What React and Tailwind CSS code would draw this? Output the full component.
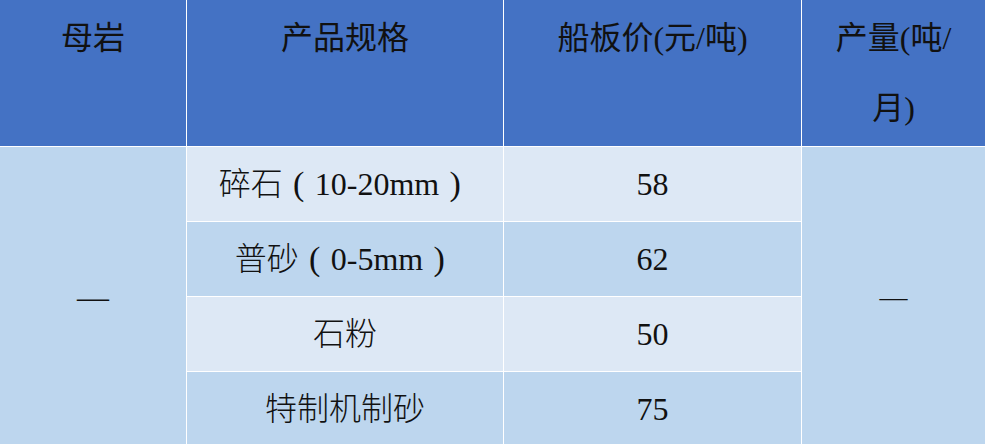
import React from "react";

const font = { fontFamily: '"Liberation Serif", "Noto Sans CJK SC", serif' };

// Song-style full-width bracket: glyph centred in a 1em box
const P = ({ children }) => (
  <span className="inline-block w-[32px] text-center text-[34px] leading-none">{children}</span>
);

const rows = [
  {
    spec: (
      <>
        碎石<P>(</P>10-20mm<P>)</P>
      </>
    ),
    price: "58",
    light: true,
  },
  {
    spec: (
      <>
        普砂<P>(</P>0-5mm<P>)</P>
      </>
    ),
    price: "62",
    light: false,
  },
  { spec: "石粉", price: "50", light: true },
  { spec: "特制机制砂", price: "75", light: false },
];

export default function App() {
  return (
    <div
      className="w-[985px] h-[444px] overflow-hidden bg-white text-[#111]"
      style={font}
    >
      <div className="grid grid-cols-[186px_316px_297px_1fr] grid-rows-[146px_74px_74px_74px_74px] gap-[1px]">
        {/* header */}
        <div className="bg-[#4472C4] text-center text-[32px] leading-[70px] pt-[3px]">母岩</div>
        <div className="bg-[#4472C4] text-center text-[32px] leading-[70px] pt-[3px]">产品规格</div>
        <div className="bg-[#4472C4] text-center text-[32px] leading-[70px] pt-[3px]">船板价(元/吨)</div>
        <div className="bg-[#4472C4] text-center text-[32px] leading-[70px] pt-[3px] px-6">产量(吨/月)</div>

        {/* merged first column */}
        <div className="row-span-4 bg-[#BDD6EE] flex items-center justify-center text-[32px]">—</div>

        {rows.map((r, i) => (
          <React.Fragment key={i}>
            <div
              className={`col-start-2 flex items-center justify-center text-[32px] font-light ${
                r.light ? "bg-[#DDE8F5]" : "bg-[#BDD6EE]"
              }`}
              style={{ gridRow: i + 2 }}
            >
              <span>{r.spec}</span>
            </div>
            <div
              className={`col-start-3 flex items-center justify-center text-[32px] ${
                r.light ? "bg-[#DDE8F5]" : "bg-[#BDD6EE]"
              }`}
              style={{ gridRow: i + 2 }}
            >
              {r.price}
            </div>
          </React.Fragment>
        ))}

        {/* merged last column */}
        <div className="col-start-4 row-start-2 row-span-4 bg-[#BDD6EE] flex items-center justify-center text-[28px]">
          —
        </div>
      </div>
    </div>
  );
}
